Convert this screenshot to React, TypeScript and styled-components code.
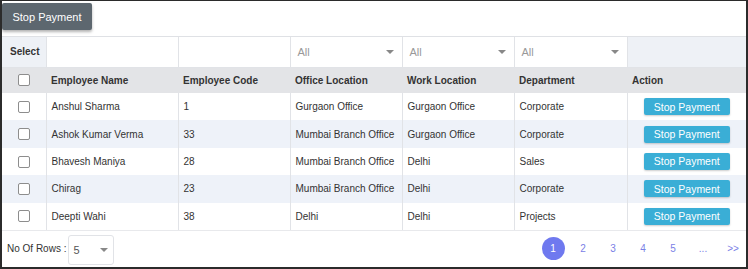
import React from "react";
import styled, { createGlobalStyle } from "styled-components";

const Global = createGlobalStyle`
  html, body { margin: 0; padding: 0; background: #fff; }
  body { font-family: "Liberation Sans", Arial, sans-serif; font-size: 10px; color: #333; }
  * { box-sizing: border-box; }
  table { font-family: "Liberation Sans", Arial, sans-serif; }
`;

const Frame = styled.div`
  width: 748px;
  height: 269px;
  border: 2px solid #2b2b2b;
  border-top-width: 1px;
  display: flex;
  flex-direction: column;
  overflow: hidden;
`;

const TopBar = styled.div`
  display: flex;
  padding: 2px 0 0 0;
  height: 36px;
  border-bottom: 1px solid #dfe1e5;
`;

const DarkButton = styled.button`
  background: #5d676f;
  color: #fff;
  border: none;
  border-radius: 2px;
  height: 27px;
  width: 90px;
  font-family: "Liberation Sans", Arial, sans-serif;
  font-size: 11px;
  padding: 0;
  box-shadow: 0 2px 3px rgba(0, 0, 0, 0.3);
`;

const Table = styled.table`
  border-collapse: collapse;
  width: 744px;
  table-layout: fixed;
`;

const FilterCell = styled.td<{ $shade?: boolean }>`
  height: 30px;
  padding: 0;
  border: 1px solid #e1e3e7;
  border-top: none;
  background: ${(p) => (p.$shade ? "#eef1f6" : "#fff")};
  font-weight: bold;
  font-size: 10px;
  color: #333;
  vertical-align: middle;
  &:first-child { border-left: none; padding-left: 8px; }
  &:last-child { border-right: none; }
`;

const SelectBox = styled.div`
  display: flex;
  align-items: center;
  justify-content: space-between;
  padding: 0 8px 0 7px;
  color: #999;
  font-weight: normal;
  font-size: 11px;
  height: 29px;
`;

const Caret = styled.span`
  width: 0;
  height: 0;
  border-left: 4px solid transparent;
  border-right: 4px solid transparent;
  border-top: 4px solid #888;
`;

const HeadCell = styled.th`
  background: #e3e4e7;
  height: 26px;
  text-align: left;
  font-size: 10px;
  font-weight: bold;
  color: #333;
  padding: 0 0 0 5px;
  &:first-child { text-align: center; padding: 0; }
`;

const Row = styled.tr<{ $alt: boolean }>`
  background: ${(p) => (p.$alt ? "#eef2f9" : "#fff")};
`;

const Cell = styled.td`
  height: 27.4px;
  padding: 0 0 0 5px;
  font-size: 10px;
  color: #333;
  white-space: nowrap;
  border-left: 1px solid #e1e3e7;
  &:first-child { border-left: none; text-align: center; padding: 0; }
  &:last-child { text-align: center; padding: 0; }
`;

const Check = styled.span`
  display: inline-block;
  width: 12px;
  height: 12px;
  border: 1px solid #8d8d8d;
  border-radius: 2px;
  background: #fff;
  vertical-align: middle;
`;

const PayButton = styled.button`
  background: #3aaed6;
  color: #fff;
  border: none;
  border-radius: 2px;
  width: 86px;
  height: 17px;
  padding: 0;
  font-family: "Liberation Sans", Arial, sans-serif;
  font-size: 10.5px;
  box-shadow: 0 1px 2px rgba(0, 0, 0, 0.2);
  vertical-align: middle;
`;

const Footer = styled.div`
  flex: 1;
  display: flex;
  align-items: center;
  justify-content: space-between;
  padding: 0 0 0 5px;
  border-top: 1px solid #e8e9ec;
`;

const RowsLabel = styled.div`
  display: flex;
  align-items: center;
  gap: 2px;
  font-size: 10px;
  color: #333;
`;

const RowsSelect = styled.div`
  width: 46px;
  height: 30px;
  border: 1px solid #e1e3e7;
  border-radius: 3px;
  display: flex;
  align-items: center;
  justify-content: space-between;
  padding: 0 5px 0 4px;
  font-size: 11px;
  color: #555;
  margin-top: 2px;
`;

const Pager = styled.div`
  display: flex;
  align-items: center;
  margin-right: -2px;
`;

const PageItem = styled.span<{ $active?: boolean }>`
  width: 30px;
  height: 23px;
  display: flex;
  align-items: center;
  justify-content: center;
  font-size: 10px;
  color: ${(p) => (p.$active ? "#fff" : "#7a80e6")};
  position: relative;
  z-index: 0;
  &::before {
    content: "";
    display: ${(p) => (p.$active ? "block" : "none")};
    position: absolute;
    width: 23px;
    height: 23px;
    border-radius: 50%;
    background: #6f79ef;
    left: 4px;
    top: 0;
    z-index: -1;
  }
`;

const rows = [
  ["Anshul Sharma", "1", "Gurgaon Office", "Gurgaon Office", "Corporate"],
  ["Ashok Kumar Verma", "33", "Mumbai Branch Office", "Gurgaon Office", "Corporate"],
  ["Bhavesh Maniya", "28", "Mumbai Branch Office", "Delhi", "Sales"],
  ["Chirag", "23", "Mumbai Branch Office", "Delhi", "Corporate"],
  ["Deepti Wahi", "38", "Delhi", "Delhi", "Projects"],
];

export default function App() {
  return (
    <>
      <Global />
      <Frame>
        <TopBar>
          <DarkButton>Stop Payment</DarkButton>
        </TopBar>
        <Table>
          <colgroup>
            <col style={{ width: 44 }} />
            <col style={{ width: 132 }} />
            <col style={{ width: 112 }} />
            <col style={{ width: 112 }} />
            <col style={{ width: 112 }} />
            <col style={{ width: 113 }} />
            <col />
          </colgroup>
          <tbody>
            <tr>
              <FilterCell $shade>Select</FilterCell>
              <FilterCell />
              <FilterCell />
              <FilterCell>
                <SelectBox>All<Caret /></SelectBox>
              </FilterCell>
              <FilterCell>
                <SelectBox>All<Caret /></SelectBox>
              </FilterCell>
              <FilterCell>
                <SelectBox>All<Caret /></SelectBox>
              </FilterCell>
              <FilterCell $shade />
            </tr>
            <tr>
              <HeadCell><Check /></HeadCell>
              <HeadCell>Employee Name</HeadCell>
              <HeadCell>Employee Code</HeadCell>
              <HeadCell>Office Location</HeadCell>
              <HeadCell>Work Location</HeadCell>
              <HeadCell>Department</HeadCell>
              <HeadCell>Action</HeadCell>
            </tr>
            {rows.map((r, i) => (
              <Row key={i} $alt={i % 2 === 1}>
                <Cell><Check /></Cell>
                {r.map((c, j) => (
                  <Cell key={j}>{c}</Cell>
                ))}
                <Cell><PayButton>Stop Payment</PayButton></Cell>
              </Row>
            ))}
          </tbody>
        </Table>
        <Footer>
          <RowsLabel>
            No Of Rows :
            <RowsSelect>5<Caret /></RowsSelect>
          </RowsLabel>
          <Pager>
            <PageItem $active>1</PageItem>
            <PageItem>2</PageItem>
            <PageItem>3</PageItem>
            <PageItem>4</PageItem>
            <PageItem>5</PageItem>
            <PageItem>...</PageItem>
            <PageItem>&gt;&gt;</PageItem>
          </Pager>
        </Footer>
      </Frame>
    </>
  );
}
